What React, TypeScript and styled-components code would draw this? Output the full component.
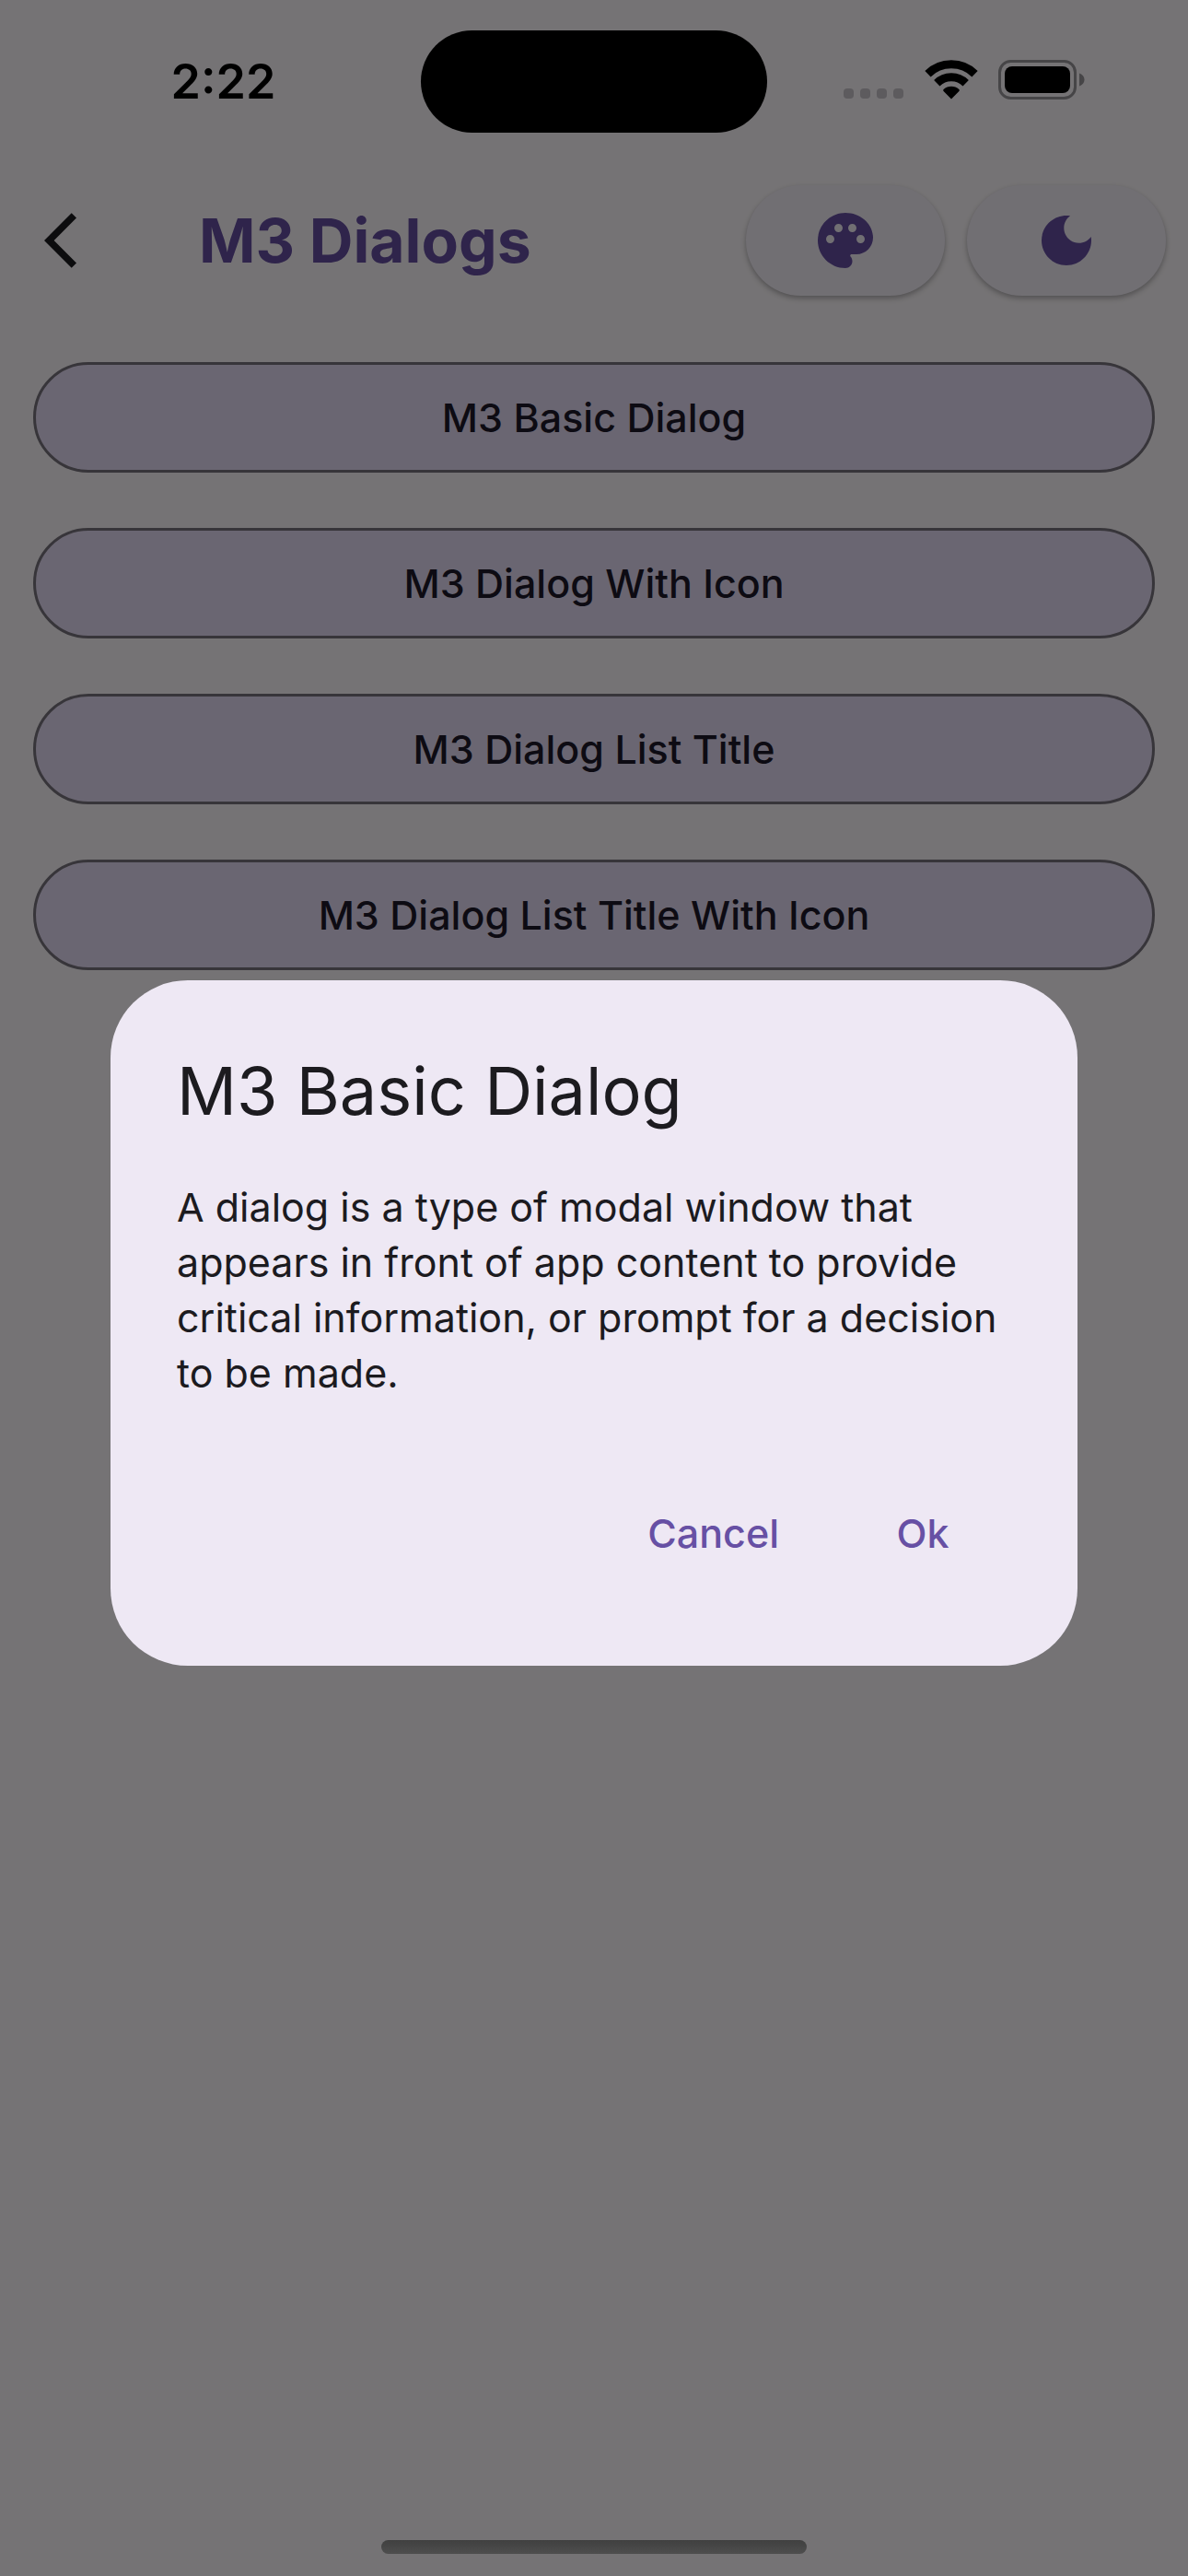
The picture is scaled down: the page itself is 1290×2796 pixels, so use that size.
import { useState } from 'react';
import styled, { createGlobalStyle } from 'styled-components';

const colors = {
  surface: '#fffbfe',
  onSurface: '#1c1b1f',
  primary: '#6750a4',
  elevated: '#f6f1fb',
  secondaryContainer: '#e8def8',
  onSecondaryContainer: '#1d192b',
  outline: '#79747e',
  dialog: '#eee8f4',
  scrim: 'rgba(0, 0, 0, 0.54)',
};

const GlobalStyle = createGlobalStyle`
  *, *::before, *::after { box-sizing: border-box; }
  body {
    margin: 0;
    background: ${colors.surface};
    font-family: Inter, Roboto, 'Liberation Sans', sans-serif;
    color: ${colors.onSurface};
  }
  h1, h2, p, ul { margin: 0; padding: 0; }
  button {
    margin: 0;
    padding: 0;
    border: 0;
    background: none;
    font: inherit;
    color: inherit;
    cursor: pointer;
  }
`;

const Screen = styled.div`
  display: flex;
  flex-direction: column;
  min-height: 100vh;
`;

const StatusBar = styled.div`
  position: relative;
  z-index: 2;
  display: grid;
  grid-template-columns: 1fr 376px 1fr;
  align-items: center;
  height: 177px;
  color: #000;
`;

const Clock = styled.time`
  padding-left: 28px;
  text-align: center;
  font-size: 52px;
  line-height: 64px;
  font-weight: 600;
`;

const Island = styled.div`
  height: 111px;
  border-radius: 56px;
  background: #000;
`;

const StatusIcons = styled.div`
  display: flex;
  align-items: center;
  justify-content: flex-end;
  gap: 22px;
  padding: 0 112px 4px 0;
`;

const AppBar = styled.header`
  display: flex;
  align-items: center;
  gap: 24px;
  height: 168px;
  padding: 0 24px;
`;

const BackButton = styled.button`
  display: flex;
  align-items: center;
  width: 144px;
  height: 144px;
  padding-left: 24px;
`;

const PageTitle = styled.h1`
  flex: 1;
  padding-left: 24px;
  font-size: 66px;
  line-height: 84px;
  font-weight: 700;
  color: ${colors.primary};
  white-space: nowrap;
`;

const ElevatedButton = styled.button`
  display: flex;
  align-items: center;
  justify-content: center;
  width: 216px;
  height: 120px;
  border-radius: 60px;
  background: ${colors.elevated};
  color: ${colors.primary};
  box-shadow: 0 3px 6px rgba(0, 0, 0, 0.24), 0 2px 4px rgba(0, 0, 0, 0.08);
`;

const DialogList = styled.ul`
  display: flex;
  flex-direction: column;
  gap: 60px;
  padding: 48px 36px;
  list-style: none;
`;

const OutlinedButton = styled.button`
  width: 100%;
  height: 120px;
  border: 3px solid ${colors.outline};
  border-radius: 60px;
  background: ${colors.secondaryContainer};
  color: ${colors.onSecondaryContainer};
  font-size: 43px;
  line-height: 60px;
  font-weight: 500;
`;

const HomeIndicator = styled.div`
  position: relative;
  z-index: 2;
  align-self: center;
  width: 462px;
  height: 15px;
  margin: auto 0 24px;
  border-radius: 8px;
  background: linear-gradient(#404040, #4e4e4e);
`;

const Scrim = styled.div`
  position: fixed;
  inset: 0;
  z-index: 1;
  display: flex;
  align-items: center;
  padding: 177px 120px 102px;
  background: ${colors.scrim};
`;

const DialogCard = styled.section`
  flex: 1;
  padding: 72px;
  border-radius: 84px;
  background: ${colors.dialog};
`;

const DialogTitle = styled.h2`
  margin-bottom: 48px;
  font-size: 72px;
  line-height: 96px;
  font-weight: 400;
`;

const DialogText = styled.p`
  margin-bottom: 72px;
  font-size: 43px;
  line-height: 60px;
`;

const DialogActions = styled.div`
  display: flex;
  justify-content: flex-end;
  gap: 24px;
  padding: 12px 0;
`;

const TextButton = styled.button`
  min-width: 192px;
  height: 120px;
  padding: 0 36px;
  border-radius: 60px;
  color: ${colors.primary};
  font-size: 43px;
  line-height: 60px;
  font-weight: 500;
`;

const Icon = ({ path }: { path: string }) => (
  <svg width="72" height="72" viewBox="0 0 24 24" fill="currentColor" aria-hidden="true">
    <path d={path} />
  </svg>
);

const BACK = 'M11.67 3.87 9.9 2.1 0 12l9.9 9.9 1.77-1.77L3.54 12z';
const PALETTE =
  'M12 2C6.49 2 2 6.49 2 12s4.49 10 10 10c1.38 0 2.5-1.12 2.5-2.5 0-.61-.23-1.2-.64-1.67-.08-.1-.13-.21-.13-.33 0-.28.22-.5.5-.5H16c3.31 0 6-2.69 6-6 0-4.96-4.49-9-10-9zm5.5 11c-.83 0-1.5-.67-1.5-1.5s.67-1.5 1.5-1.5 1.5.67 1.5 1.5-.67 1.5-1.5 1.5zm-3-4c-.83 0-1.5-.67-1.5-1.5S13.67 6 14.5 6s1.5.67 1.5 1.5S15.33 9 14.5 9zM5 11.5c0-.83.67-1.5 1.5-1.5s1.5.67 1.5 1.5S7.33 13 6.5 13 5 12.33 5 11.5zm6-4c0 .83-.67 1.5-1.5 1.5S8 8.33 8 7.5 8.67 6 9.5 6s1.5.67 1.5 1.5z';
const MOON =
  'M12 3c-4.97 0-9 4.03-9 9s4.03 9 9 9 9-4.03 9-9c0-.46-.04-.92-.1-1.36-.98 1.37-2.58 2.26-4.4 2.26-2.98 0-5.4-2.42-5.4-5.4 0-1.81.89-3.42 2.26-4.4-.44-.06-.9-.1-1.36-.1z';

const Signal = () => (
  <svg width="66" height="43" viewBox="0 0 66 43" fill="#5d5b5e" aria-hidden="true">
    {[0, 18, 36, 54].map((x) => (
      <rect key={x} x={x} y="31" width="11" height="11" rx="4" />
    ))}
  </svg>
);

const Wifi = () => (
  <svg width="58" height="43" viewBox="0 0 58 43" aria-hidden="true">
    <g fill="none" stroke="#000" strokeWidth="9">
      <path d="M3.5 15.2A36.5 36.5 0 0 1 54.5 15.2" />
      <path d="M13.3 25.2A22.3 22.3 0 0 1 44.7 25.2" />
    </g>
    <path d="M29 42.5 20.6 34q-1-1 0-2a12.5 12.5 0 0 1 16.8 0q1 1 0 2z" />
  </svg>
);

const Battery = () => (
  <svg width="94" height="43" viewBox="0 0 94 43" aria-hidden="true">
    <rect x="1.5" y="1.5" width="82" height="40" rx="12" fill="none" stroke="#464547" strokeWidth="3" />
    <rect x="7" y="7" width="71" height="29" rx="8" />
    <path d="M88 14.5c3.500 1.200 5.500 4 5.500 7s-2 5.800-5.500 7z" fill="#464547" />
  </svg>
);

const dialogs = [
  'M3 Basic Dialog',
  'M3 Dialog With Icon',
  'M3 Dialog List Title',
  'M3 Dialog List Title With Icon',
];

export default function App() {
  const [open, setOpen] = useState(true);
  const show = () => setOpen(true);
  const close = () => setOpen(false);

  return (
    <Screen>
      <GlobalStyle />
      <StatusBar>
        <Clock>2:22</Clock>
        <Island />
        <StatusIcons>
          <Signal />
          <Wifi />
          <Battery />
        </StatusIcons>
      </StatusBar>
      <AppBar>
        <BackButton type="button" aria-label="Back">
          <Icon path={BACK} />
        </BackButton>
        <PageTitle>M3 Dialogs</PageTitle>
        <ElevatedButton type="button" aria-label="Theme colour">
          <Icon path={PALETTE} />
        </ElevatedButton>
        <ElevatedButton type="button" aria-label="Dark mode">
          <Icon path={MOON} />
        </ElevatedButton>
      </AppBar>
      <DialogList>
        {dialogs.map((name) => (
          <li key={name}>
            <OutlinedButton type="button" onClick={show}>
              {name}
            </OutlinedButton>
          </li>
        ))}
      </DialogList>
      <HomeIndicator />
      {open && (
        <Scrim>
          <DialogCard role="dialog" aria-modal="true" aria-labelledby="dialog-title">
            <DialogTitle id="dialog-title">M3 Basic Dialog</DialogTitle>
            <DialogText>
              A dialog is a type of modal window that appears in front of app content to provide
              critical information, or prompt for a decision to be made.
            </DialogText>
            <DialogActions>
              <TextButton type="button" onClick={close}>
                Cancel
              </TextButton>
              <TextButton type="button" onClick={close}>
                Ok
              </TextButton>
            </DialogActions>
          </DialogCard>
        </Scrim>
      )}
    </Screen>
  );
}
